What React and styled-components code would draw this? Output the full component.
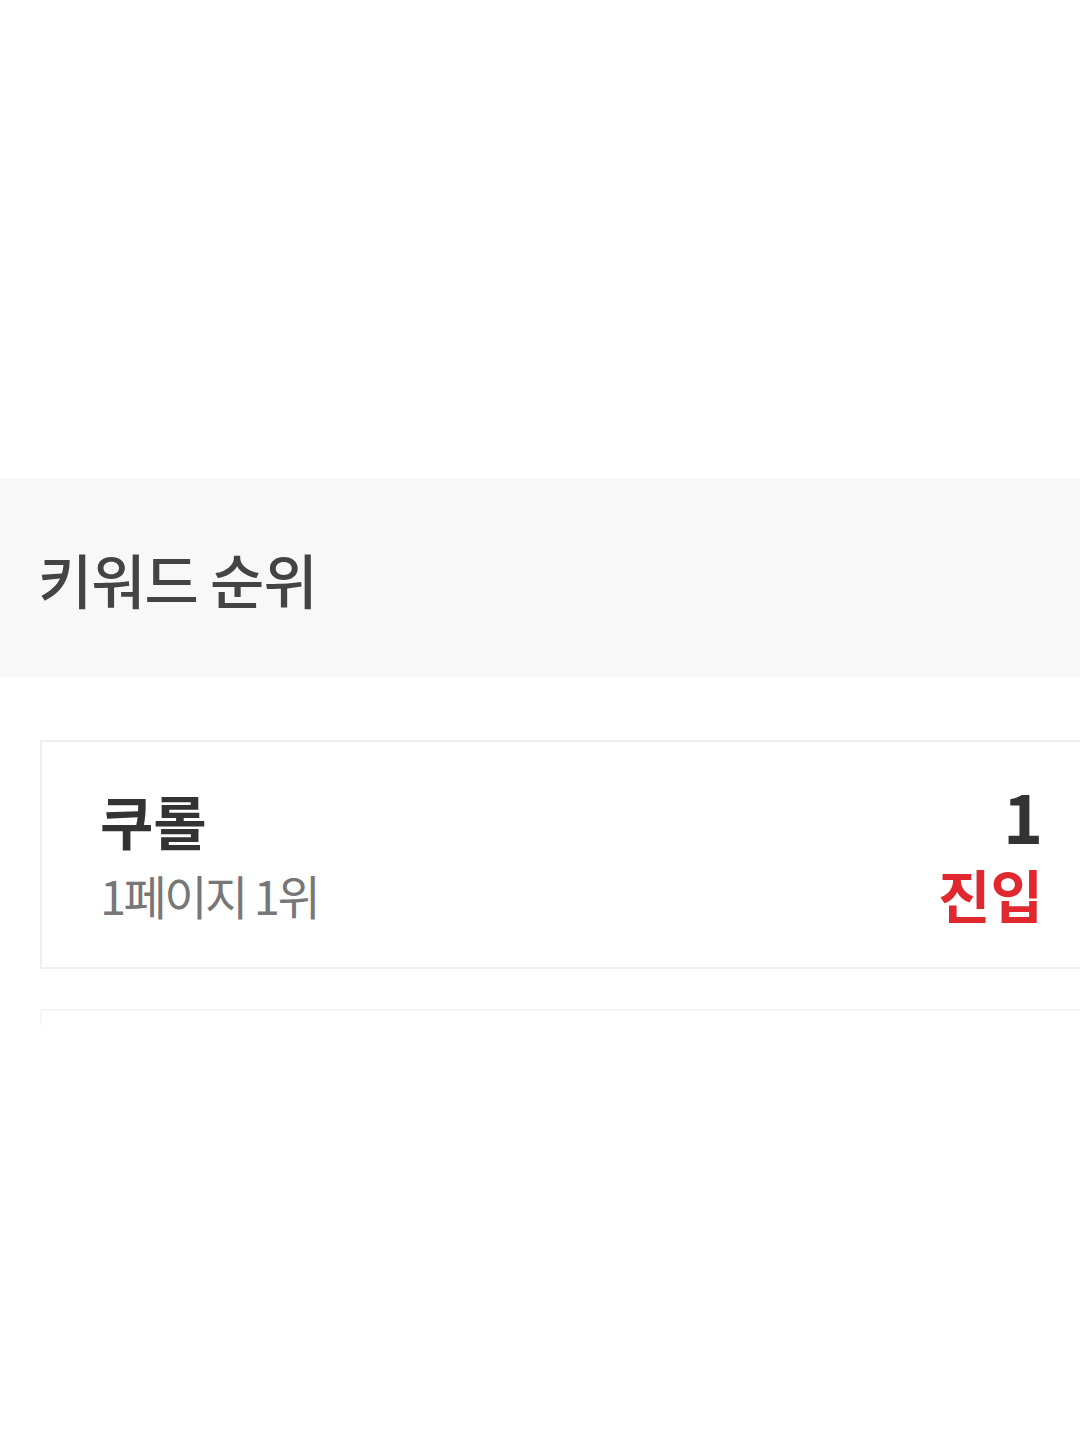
import React from 'react'
import styled, { createGlobalStyle } from 'styled-components'

const GlobalStyle = createGlobalStyle`
    html, body {
        margin: 0;
        padding: 0;
        background-color: #ffffff;
        overflow-x: hidden;
    }
    body {
        font-family: "Noto Sans CJK KR", "Noto Sans", sans-serif;
    }
`

const rankings = [
    { keyword: '쿠롤', detail: '1페이지 1위', rank: '1', status: '진입' },
]

const App = () => {
    return (
        <Page>
            <GlobalStyle />
            <TopSpace />
            <SectionHeader>
                <SectionTitle>키워드 순위</SectionTitle>
            </SectionHeader>
            <CardList>
                {rankings.map(item => (
                    <Card key={item.keyword}>
                        <LeftCol>
                            <Keyword>{item.keyword}</Keyword>
                            <Detail>{item.detail}</Detail>
                        </LeftCol>
                        <RightCol>
                            <Rank>{item.rank}</Rank>
                            <Status>{item.status}</Status>
                        </RightCol>
                    </Card>
                ))}
                <GhostCard />
            </CardList>
        </Page>
    )
}

export default App

const Page = styled.div`
    width: 1080px;
    min-height: 1440px;
    background-color: #ffffff;
`

const TopSpace = styled.div`
    height: 478px;
`

const SectionHeader = styled.div`
    height: 200px;
    background-color: #f8f8f8;
    display: flex;
    align-items: center;
    padding: 0 38px;
    box-sizing: border-box;
`

const SectionTitle = styled.h2`
    margin: 0;
    font-size: 59px;
    font-weight: 500;
    color: #444444;
    letter-spacing: -1px;
    line-height: 1;
`

const CardList = styled.div`
    display: flex;
    flex-direction: column;
    gap: 40px;
    padding: 62px 0 0 40px;
`

const Card = styled.div`
    display: flex;
    justify-content: space-between;
    align-items: center;
    height: 229px;
    margin-right: -20px;
    padding: 0 57px 0 58px;
    border: 2px solid #efefef;
    border-right: none;
    box-sizing: border-box;
    background-color: #ffffff;
`

const GhostCard = styled.div`
    height: 14px;
    margin-right: -20px;
    border-top: 2px solid #f3f3f3;
    border-left: 2px solid #f6f6f6;
`

const LeftCol = styled.div`
    display: flex;
    flex-direction: column;
    gap: 12px;
`

const RightCol = styled.div`
    display: flex;
    flex-direction: column;
    align-items: flex-end;
    gap: 10px;
`

const Keyword = styled.div`
    font-size: 58px;
    font-weight: 700;
    color: #333333;
    line-height: 1.2;
`

const Detail = styled.div`
    font-size: 47px;
    font-weight: 400;
    color: #777777;
    line-height: 1.2;
    letter-spacing: -2.5px;
`

const Rank = styled.div`
    font-size: 68px;
    font-weight: 700;
    color: #333333;
    line-height: 1;
`

const Status = styled.div`
    font-size: 57px;
    font-weight: 700;
    color: #e0282e;
    line-height: 1.2;
`
